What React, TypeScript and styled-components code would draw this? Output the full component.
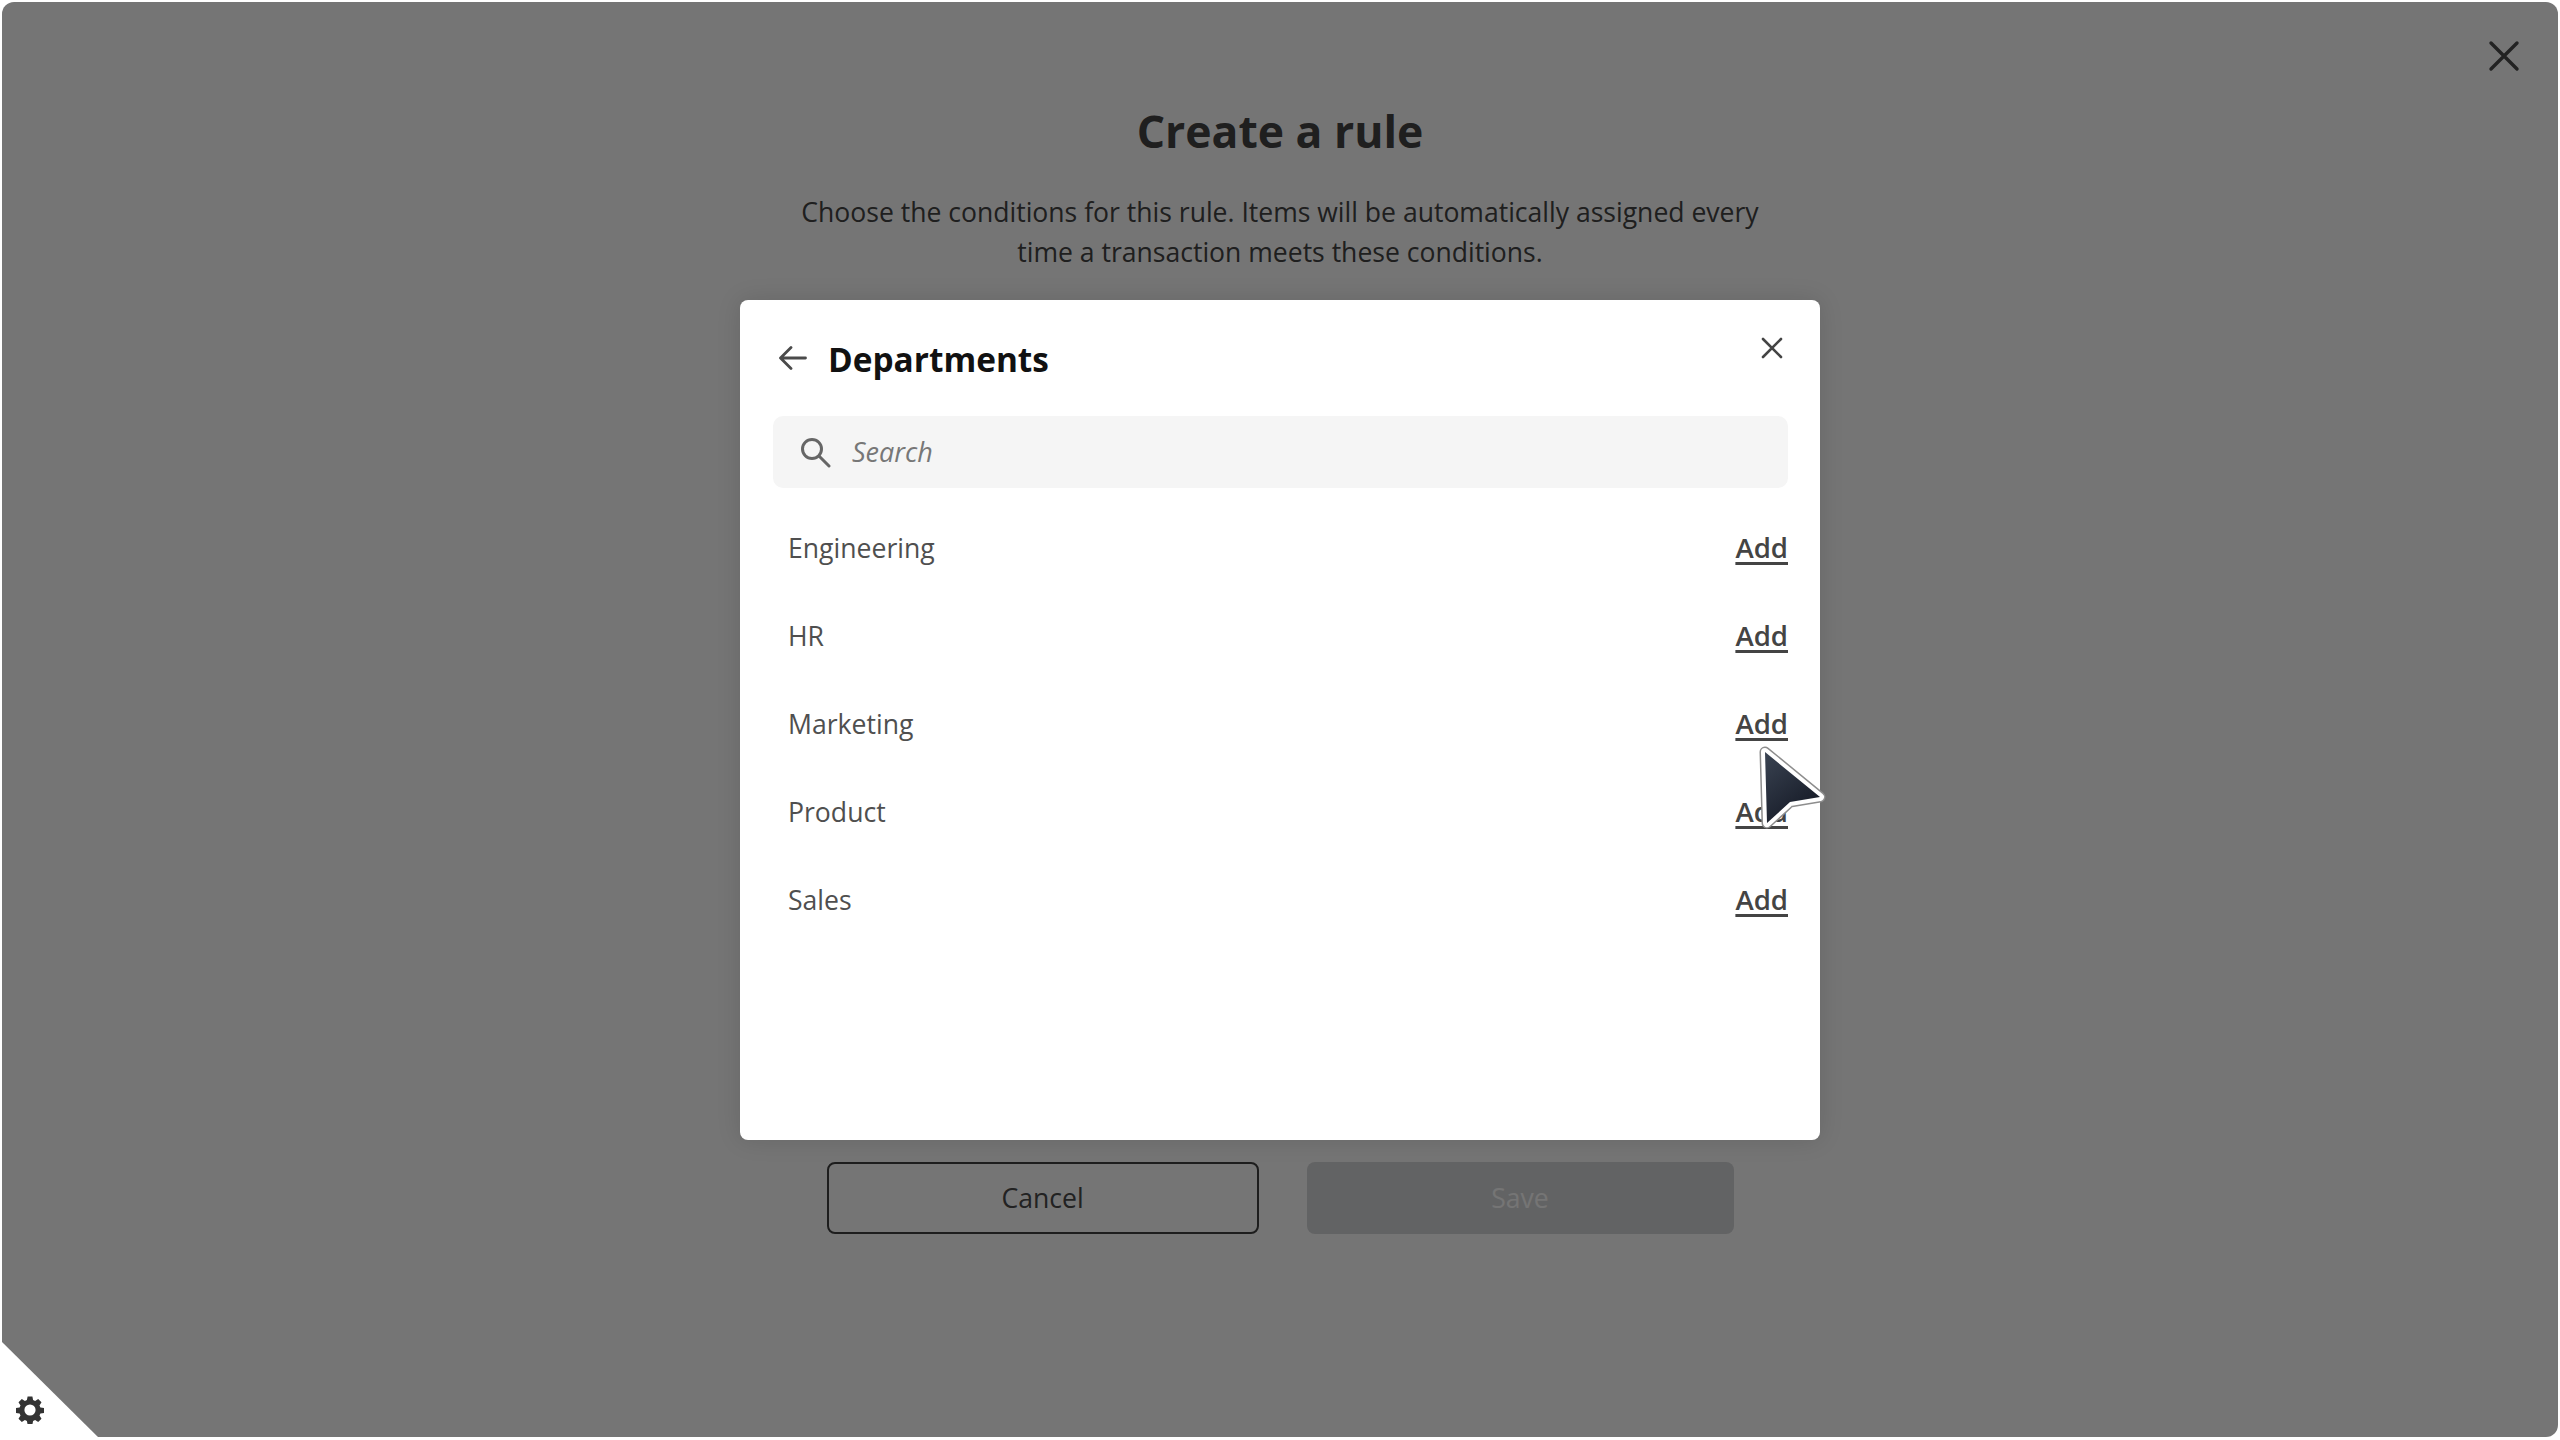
import React from "react";
import styled, { createGlobalStyle } from "styled-components";

const Global = createGlobalStyle`
  html, body { margin: 0; padding: 0; background: #fff; }
  body { font-family: "Open Sans", "Noto Sans", sans-serif; }
  * { box-sizing: border-box; }
`;

const Page = styled.div`
  position: relative;
  width: 2560px;
  height: 1440px;
  overflow: hidden;
  background: #fff;
  display: flex;
  flex-direction: column;
  align-items: center;
  padding-top: 101px;
`;

const PageTitle = styled.h1`
  margin: 0;
  font-size: 44.5px;
  line-height: 60px;
  font-weight: 700;
  color: #444;
`;

const Intro = styled.p`
  margin: 31px 0 0;
  width: 1000px;
  text-align: center;
  font-size: 26.55px;
  line-height: 40px;
  color: #444;
`;

const Actions = styled.div`
  margin-top: 890px;
  display: flex;
  gap: 48px;
`;

const Button = styled.button<{ $primary?: boolean }>`
  width: ${(p) => (p.$primary ? 427 : 432)}px;
  height: 72px;
  border-radius: 8px;
  font: inherit;
  font-size: 26.6px;
  color: ${(p) => (p.$primary ? "#fff" : "#4a4a4a")};
  background: ${(p) => (p.$primary ? "#d6d7d9" : "#fff")};
  border: ${(p) => (p.$primary ? "none" : "2.5px solid #404040")};
`;

const Overlay = styled.div`
  position: absolute;
  inset: 2px 2px 3px 2px;
  border-radius: 12px;
  background: rgba(0, 0, 0, 0.54);
`;

const TopClose = styled.div`
  position: absolute;
  top: 40px;
  right: 40px;
  display: flex;
  color: #222;
`;

const Corner = styled.div`
  position: absolute;
  left: 0;
  bottom: 0;
  width: 101px;
  height: 100px;
  background: #fff;
  clip-path: polygon(0 0, 100% 100%, 0 100%);
`;

const Gear = styled.div`
  position: absolute;
  left: 16px;
  bottom: 16px;
  display: flex;
  color: #333;
`;

const ModalLayer = styled.div`
  position: absolute;
  inset: 0;
  display: flex;
  align-items: center;
  justify-content: center;
`;

const Dialog = styled.div`
  width: 1080px;
  height: 840px;
  background: #fff;
  border-radius: 8px;
  padding: 38px 32px 0 33px;
  box-shadow: 0 0 24px rgba(0, 0, 0, 0.12);
  display: flex;
  flex-direction: column;
`;

const Header = styled.div`
  height: 78px;
  display: flex;
  align-items: flex-start;
`;

const Back = styled.div`
  height: 40px;
  display: flex;
  align-items: center;
  margin-left: 6px;
  margin-right: 21px;
  color: #4a4a4a;
`;

const DialogTitle = styled.h2`
  margin: 1px 0 0;
  font-size: 33.4px;
  line-height: 40px;
  font-weight: 700;
  color: #111;
  flex: 1;
`;

const Close = styled.div`
  display: flex;
  margin: -1px 5px 0 0;
  color: #444;
`;

const SearchBox = styled.div`
  height: 72px;
  background: #f5f5f5;
  border-radius: 10px;
  display: flex;
  align-items: center;
  padding-left: 27px;
  gap: 21px;
  color: #666;
`;

const Placeholder = styled.span`
  font-style: italic;
  font-size: 27px;
  margin-top: -1px;
  color: #777;
`;

const List = styled.div`
  margin-top: 15.5px;
  display: flex;
  flex-direction: column;
`;

const Row = styled.div`
  height: 88px;
  padding-left: 15px;
  display: flex;
  align-items: center;
  justify-content: space-between;
  font-size: 26.6px;
  color: #4f4f4f;
`;

const AddLink = styled.a`
  font-weight: 600;
  font-size: 27.6px;
  margin-top: -2px;
  color: #444;
  text-decoration: underline;
  text-decoration-thickness: 3px;
  text-underline-offset: 4px;
`;

const Cursor = styled.svg`
  position: absolute;
  left: 1755px;
  top: 742px;
`;

const rows = ["Engineering", "HR", "Marketing", "Product", "Sales"];
const arrow = "M10 10 L65 55 L35 60 L12 81 Z";

export default function App() {
  return (
    <Page>
      <Global />
      <PageTitle>Create a rule</PageTitle>
      <Intro>
        Choose the conditions for this rule. Items will be automatically assigned every
        <br />
        time a transaction meets these conditions.
      </Intro>
      <Actions>
        <Button>Cancel</Button>
        <Button $primary>Save</Button>
      </Actions>
      <Overlay />
      <TopClose>
        <svg width="32" height="32" viewBox="0 0 32 32" fill="none" stroke="currentColor" strokeWidth="3.4" strokeLinecap="round">
          <path d="M3 3 L29 29 M29 3 L3 29" />
        </svg>
      </TopClose>
      <Corner />
      <Gear>
        <svg width="28" height="28" viewBox="0 0 28 28" fill="currentColor">
          <path
            fillRule="evenodd"
            d="M11.6 0.5h4.8l.7 3.6 2 .9 3.1-2 3.3 3.3-2 3.1.9 2 3.6.7v4.8l-3.6.7-.9 2 2 3.1-3.3 3.3-3.1-2-2 .9-.7 3.6h-4.8l-.7-3.6-2-.9-3.1 2-3.3-3.3 2-3.1-.9-2-3.6-.7v-4.8l3.6-.7.9-2-2-3.1 3.3-3.3 3.1 2 2-.9zM14 8.4a5.6 5.6 0 1 0 0 11.2a5.6 5.6 0 0 0 0-11.2z"
          />
        </svg>
      </Gear>
      <ModalLayer>
        <Dialog>
          <Header>
            <Back>
              <svg width="28" height="24" viewBox="0 0 28 24" fill="none" stroke="currentColor" strokeWidth="2.8" strokeLinecap="round" strokeLinejoin="round">
                <path d="M26.5 12H2M12 1.5 1.5 12 12 22.5" />
              </svg>
            </Back>
            <DialogTitle>Departments</DialogTitle>
            <Close>
              <svg width="22" height="22" viewBox="0 0 22 22" fill="none" stroke="currentColor" strokeWidth="2.6" strokeLinecap="round">
                <path d="M2 2 L20 20 M20 2 L2 20" />
              </svg>
            </Close>
          </Header>
          <SearchBox>
            <svg width="31" height="31" viewBox="0 0 31 31" fill="none" stroke="currentColor" strokeWidth="3" strokeLinecap="round">
              <circle cx="12" cy="12" r="9.5" />
              <path d="M19 19 L29 29" />
            </svg>
            <Placeholder>Search</Placeholder>
          </SearchBox>
          <List>
            {rows.map((r) => (
              <Row key={r}>
                <span>{r}</span>
                <AddLink>Add</AddLink>
              </Row>
            ))}
          </List>
        </Dialog>
      </ModalLayer>
      <Cursor width="76" height="92" viewBox="0 0 76 92">
        <defs>
          <linearGradient id="cursorFill" x1="0" y1="0" x2="0.6" y2="1">
            <stop offset="0" stopColor="#3a4352" />
            <stop offset="1" stopColor="#151a26" />
          </linearGradient>
        </defs>
        <path d={arrow} fill="none" stroke="#8d8d8d" strokeWidth="11" strokeLinejoin="round" />
        <path d={arrow} fill="none" stroke="#fff" strokeWidth="8" strokeLinejoin="round" />
        <path d={arrow} fill="url(#cursorFill)" />
      </Cursor>
    </Page>
  );
}
